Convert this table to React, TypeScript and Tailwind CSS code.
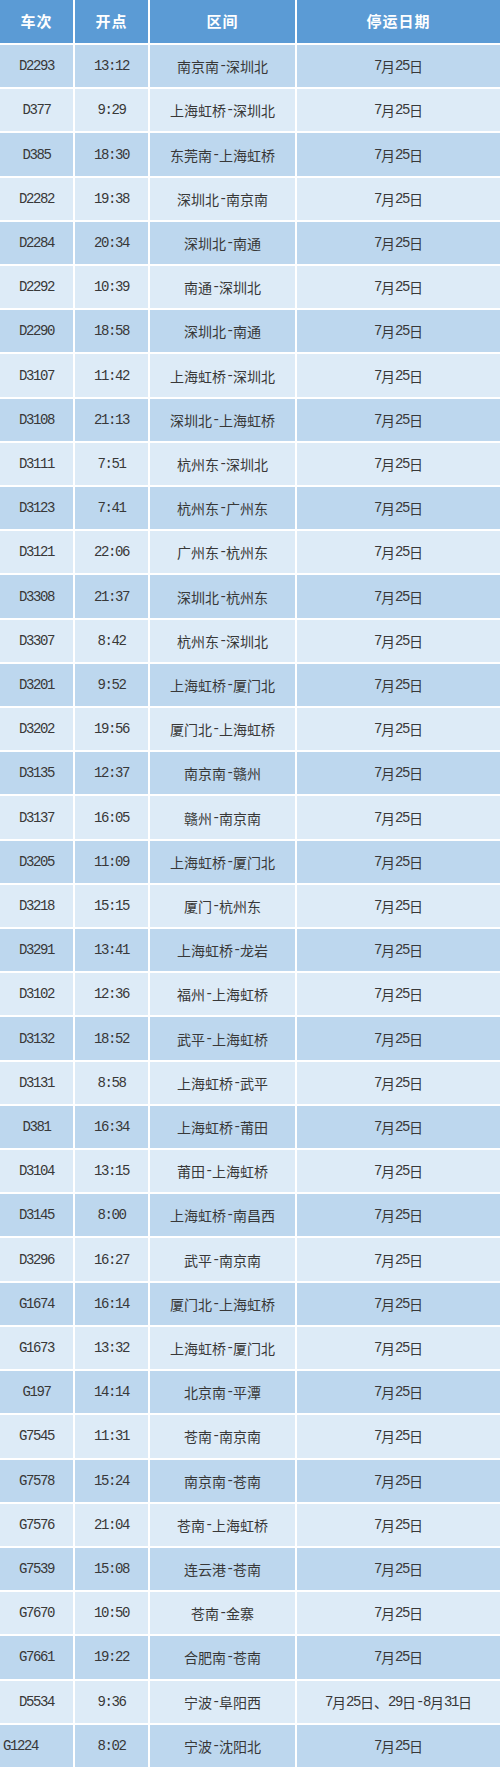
import React from "react";

const rows: [string, string, string, string][] = [
  ["D2293", "13:12", "南京南-深圳北", "7月25日"],
  ["D377", "9:29", "上海虹桥-深圳北", "7月25日"],
  ["D385", "18:30", "东莞南-上海虹桥", "7月25日"],
  ["D2282", "19:38", "深圳北-南京南", "7月25日"],
  ["D2284", "20:34", "深圳北-南通", "7月25日"],
  ["D2292", "10:39", "南通-深圳北", "7月25日"],
  ["D2290", "18:58", "深圳北-南通", "7月25日"],
  ["D3107", "11:42", "上海虹桥-深圳北", "7月25日"],
  ["D3108", "21:13", "深圳北-上海虹桥", "7月25日"],
  ["D3111", "7:51", "杭州东-深圳北", "7月25日"],
  ["D3123", "7:41", "杭州东-广州东", "7月25日"],
  ["D3121", "22:06", "广州东-杭州东", "7月25日"],
  ["D3308", "21:37", "深圳北-杭州东", "7月25日"],
  ["D3307", "8:42", "杭州东-深圳北", "7月25日"],
  ["D3201", "9:52", "上海虹桥-厦门北", "7月25日"],
  ["D3202", "19:56", "厦门北-上海虹桥", "7月25日"],
  ["D3135", "12:37", "南京南-赣州", "7月25日"],
  ["D3137", "16:05", "赣州-南京南", "7月25日"],
  ["D3205", "11:09", "上海虹桥-厦门北", "7月25日"],
  ["D3218", "15:15", "厦门-杭州东", "7月25日"],
  ["D3291", "13:41", "上海虹桥-龙岩", "7月25日"],
  ["D3102", "12:36", "福州-上海虹桥", "7月25日"],
  ["D3132", "18:52", "武平-上海虹桥", "7月25日"],
  ["D3131", "8:58", "上海虹桥-武平", "7月25日"],
  ["D381", "16:34", "上海虹桥-莆田", "7月25日"],
  ["D3104", "13:15", "莆田-上海虹桥", "7月25日"],
  ["D3145", "8:00", "上海虹桥-南昌西", "7月25日"],
  ["D3296", "16:27", "武平-南京南", "7月25日"],
  ["G1674", "16:14", "厦门北-上海虹桥", "7月25日"],
  ["G1673", "13:32", "上海虹桥-厦门北", "7月25日"],
  ["G197", "14:14", "北京南-平潭", "7月25日"],
  ["G7545", "11:31", "苍南-南京南", "7月25日"],
  ["G7578", "15:24", "南京南-苍南", "7月25日"],
  ["G7576", "21:04", "苍南-上海虹桥", "7月25日"],
  ["G7539", "15:08", "连云港-苍南", "7月25日"],
  ["G7670", "10:50", "苍南-金寨", "7月25日"],
  ["G7661", "19:22", "合肥南-苍南", "7月25日"],
  ["D5534", "9:36", "宁波-阜阳西", "7月25日、29日-8月31日"],
  ["G1224", "8:02", "宁波-沈阳北", "7月25日"],
];

function Mixed({ text }: { text: string }) {
  const parts = text.match(/[\x20-\x7e]+|[^\x20-\x7e]+/g) || [];
  return (
    <>
      {parts.map((p, i) =>
        /^[\x20-\x7e]+$/.test(p) ? (
          <span
            key={i}
            className="font-['Liberation_Mono',monospace] tracking-[-1.4px] text-[14px]"
          >
            {p}
          </span>
        ) : (
          <span
            key={i}
            className="font-['Noto_Sans_CJK_SC',sans-serif] text-[14px]"
          >
            {p}
          </span>
        )
      )}
    </>
  );
}

export default function App() {
  return (
    <div className="w-[500px] h-[1767px] bg-white flex flex-col gap-[2px] text-[#383838]">
      <div className="grid grid-cols-[73px_73px_145px_1fr] gap-[2px] h-[43px] shrink-0">
        {["车次", "开点", "区间", "停运日期"].map((h) => (
          <div
            key={h}
            className="bg-[#5b9bd5] flex items-center justify-center text-white font-bold text-[15px] font-['Noto_Sans_CJK_SC',sans-serif] tracking-[1px]"
          >
            {h}
          </div>
        ))}
      </div>
      {rows.map((r, i) => {
        const bg = i % 2 === 0 ? "bg-[#bdd7ee]" : "bg-[#ddebf7]";
        const leftAlign = r[0] === "G1224";
        return (
          <div
            key={r[0]}
            className="grid grid-cols-[73px_73px_145px_1fr] gap-[2px] flex-1"
          >
            {r.map((c, j) => (
              <div
                key={j}
                className={`${bg} flex items-center ${
                  leftAlign && j === 0 ? "justify-start pl-[3px]" : "justify-center"
                } leading-none`}
              >
                <Mixed text={c} />
              </div>
            ))}
          </div>
        );
      })}
    </div>
  );
}
